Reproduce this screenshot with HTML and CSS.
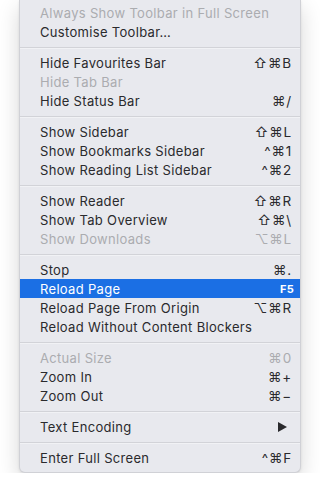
FILE: index.html
```html
<!DOCTYPE html>
<html lang="en">
<head>
<meta charset="UTF-8" />
<title>View Menu</title>
<meta name="viewport" content="width=device-width, initial-scale=1" />
<link rel="stylesheet" href="styles.css">
</head>
<body>

<ul class="menu">
  <li class="item disabled"><span class="label">Always Show Toolbar in Full Screen</span></li>
  <li class="item"><span class="label">Customise Toolbar…</span></li>
  <li class="sep"></li>
  <li class="item"><span class="label">Hide Favourites Bar</span><span class="key">⇧⌘B</span></li>
  <li class="item disabled"><span class="label">Hide Tab Bar</span></li>
  <li class="item"><span class="label">Hide Status Bar</span><span class="key">⌘/</span></li>
  <li class="sep"></li>
  <li class="item"><span class="label">Show Sidebar</span><span class="key">⇧⌘L</span></li>
  <li class="item"><span class="label">Show Bookmarks Sidebar</span><span class="key">^⌘1</span></li>
  <li class="item"><span class="label">Show Reading List Sidebar</span><span class="key">^⌘2</span></li>
  <li class="sep"></li>
  <li class="item"><span class="label">Show Reader</span><span class="key">⇧⌘R</span></li>
  <li class="item"><span class="label">Show Tab Overview</span><span class="key">⇧⌘\</span></li>
  <li class="item disabled"><span class="label">Show Downloads</span><span class="key">⌥⌘L</span></li>
  <li class="sep"></li>
  <li class="item"><span class="label">Stop</span><span class="key">⌘.</span></li>
  <li class="item active"><span class="label">Reload Page</span><span class="key fkey">F5</span></li>
  <li class="item"><span class="label">Reload Page From Origin</span><span class="key">⌥⌘R</span></li>
  <li class="item"><span class="label">Reload Without Content Blockers</span></li>
  <li class="sep"></li>
  <li class="item disabled"><span class="label">Actual Size</span><span class="key">⌘0</span></li>
  <li class="item"><span class="label">Zoom In</span><span class="key">⌘+</span></li>
  <li class="item"><span class="label">Zoom Out</span><span class="key">⌘−</span></li>
  <li class="sep"></li>
  <li class="item"><span class="label">Text Encoding</span><span class="arrow"></span></li>
  <li class="sep"></li>
  <li class="item"><span class="label">Enter Full Screen</span><span class="key">^⌘F</span></li>
</ul>

</body>
</html>
```

FILE: styles.css
```css
body {
  margin: 0;
  background: #ffffff;
  font-family: "Inter", "Liberation Sans", "DejaVu Sans", sans-serif;
  font-size: 13px;
  color: #2a2a2d;
}
.menu {
  list-style: none;
  margin: 0 0 0 19px;
  padding: 3px 0 5px;
  width: 280px;
  background: #e8e9ee;
  border: 1px solid #d0d1d6;
  border-top: none;
  border-radius: 0 0 6px 6px;
  box-shadow: 0 8px 22px rgba(0, 0, 0, 0.16), 0 1px 3px rgba(0, 0, 0, 0.08);
}
.item {
  display: flex;
  align-items: center;
  justify-content: space-between;
  height: 19px;
  padding: 0 9px 0 20px;
  letter-spacing: 0.32px;
}
.item.disabled {
  color: #abacb0;
}
.item.active {
  background: #1b6fe4;
  color: #ffffff;
}
.key {
  font-size: 13.5px;
  letter-spacing: 0.8px;
  margin-right: -1px;
}
.fkey {
  font-size: 11px;
  font-weight: 700;
  letter-spacing: 0.3px;
  margin-right: -3px;
}
.arrow {
  width: 0;
  height: 0;
  margin-right: 4px;
  border-top: 5px solid transparent;
  border-bottom: 5px solid transparent;
  border-left: 9px solid #2a2a2d;
}
.sep {
  height: 12px;
  display: flex;
  align-items: center;
}
.sep::before {
  content: "";
  display: block;
  width: 100%;
  height: 1px;
  background: #d2d3d8;
  box-shadow: 0 1px 0 #f1f2f5;
}
```
